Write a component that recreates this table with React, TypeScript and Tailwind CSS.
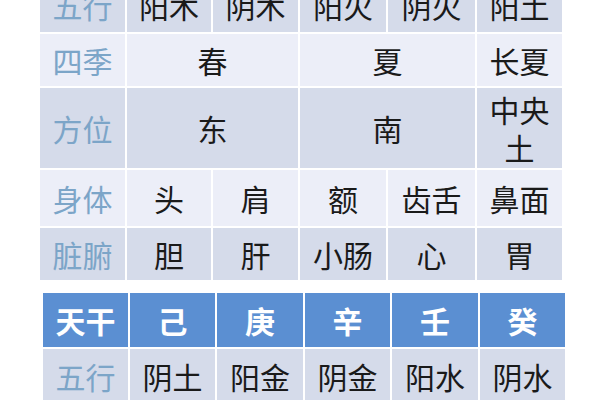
import React from "react";

const font = { fontFamily: '"Noto Sans CJK SC", "Noto Sans", sans-serif' };

type Cell = { t: string; span?: number; lines?: boolean };

function Row({ label, cells, bg, h }: { label: string; cells: Cell[]; bg: string; h: string }) {
  return (
    <>
      <div className={`${bg} ${h} flex items-center justify-center text-[30px] text-[#7ca5c8]`}>{label}</div>
      {cells.map((c, i) => (
        <div
          key={i}
          className={`${bg} ${h} flex items-center justify-center text-center text-[30px] leading-[38px] text-[#1a1a1a] ${c.span === 2 ? "col-span-2" : ""}`}
        >
          {c.lines ? (
            <span className="flex flex-col items-center">
              <span>中央</span>
              <span>土</span>
            </span>
          ) : (
            c.t
          )}
        </div>
      ))}
    </>
  );
}

export default function App() {
  const dark = "bg-[#d5dbea]";
  const light = "bg-[#eceef8]";
  return (
    <div className="w-[600px] h-[400px] bg-white overflow-hidden" style={font}>
      <div className="ml-[40px] mt-[-22px] w-[522px] grid grid-cols-[85px_84px_85px_86px_87px_85px] gap-[2px]">
        <Row label="五行" bg={dark} h="h-[54px]" cells={[{ t: "阳木" }, { t: "阴木" }, { t: "阳火" }, { t: "阴火" }, { t: "阳土" }]} />
        <Row label="四季" bg={light} h="h-[52px]" cells={[{ t: "春", span: 2 }, { t: "夏", span: 2 }, { t: "长夏" }]} />
        <Row label="方位" bg={dark} h="h-[80px]" cells={[{ t: "东", span: 2 }, { t: "南", span: 2 }, { t: "中央土", lines: true }]} />
        <Row label="身体" bg={light} h="h-[56px]" cells={[{ t: "头" }, { t: "肩" }, { t: "额" }, { t: "齿舌" }, { t: "鼻面" }]} />
        <Row label="脏腑" bg={dark} h="h-[52px]" cells={[{ t: "胆" }, { t: "肝" }, { t: "小肠" }, { t: "心" }, { t: "胃" }]} />
      </div>
      <div className="ml-[43px] mt-[13px] w-[522px] grid grid-cols-[85px_85px_86px_85px_86px_85px] gap-[2px]">
        {["天干", "己", "庚", "辛", "壬", "癸"].map((t) => (
          <div key={t} className="bg-[#5b8fd2] h-[54px] flex items-center justify-center text-[30px] font-bold text-white">
            {t}
          </div>
        ))}
        <Row label="五行" bg={dark} h="h-[54px]" cells={[{ t: "阴土" }, { t: "阳金" }, { t: "阴金" }, { t: "阳水" }, { t: "阴水" }]} />
      </div>
    </div>
  );
}
